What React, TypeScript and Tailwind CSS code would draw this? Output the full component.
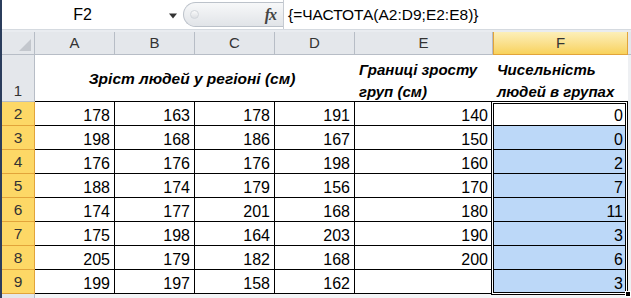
import * as React from "react";

const rows = [
  [178, 163, 178, 191, 140, 0],
  [198, 168, 186, 167, 150, 0],
  [176, 176, 176, 198, 160, 2],
  [188, 174, 179, 156, 170, 7],
  [174, 177, 201, 168, 180, 11],
  [175, 198, 164, 203, 190, 3],
  [205, 179, 182, 168, 200, 6],
  [199, 197, 158, 162, null, 3],
];

const widths = ["w-[80px]", "w-[80px]", "w-[80px]", "w-[80px]", "w-[138px]", "w-[135px]"];
const letters = ["A", "B", "C", "D", "E", "F"];

function FormulaBar() {
  return (
    <div className="flex h-[29px] items-center bg-white">
      <div className="relative flex h-full w-[181px] items-center justify-center">
        <span className="mr-[20px] text-[16px] text-black">F2</span>
        <svg className="absolute left-[166px] top-[13px]" width="10" height="6" viewBox="0 0 10 6">
          <path d="M1 0.5 L9 0.5 L5 5.5 Z" fill="#333" />
        </svg>
      </div>
      <div className="flex h-[25px] w-[100px] items-center rounded-l-full border border-r-0 border-[#bcc2ca] bg-gradient-to-b from-[#f7f8f9] to-[#e1e4e8] pl-[6px]">
        <div className="h-[9px] w-[9px] rounded-full border border-[#d2d6db] bg-gradient-to-b from-[#fafafa] to-[#dcdfe3]" />
        <span className="ml-auto mr-[7px] font-['Liberation_Serif',serif] text-[16px] font-bold italic text-[#444] tracking-[-1px]">
          fx
        </span>
      </div>
      <div className="flex h-full flex-1 items-center border-l border-[#c6cbd2] pl-[4px]">
        <span className="text-[15.5px] text-black">{"{=ЧАСТОТА(A2:D9;E2:E8)}"}</span>
      </div>
    </div>
  );
}

function ColumnHeader() {
  return (
    <div className="flex h-[23px]">
      <div className="relative h-full w-[33px] border-r border-b border-[#b7bdc6] bg-[#e4e7eb]">
        <svg className="absolute right-[3px] bottom-[3px]" width="12" height="12" viewBox="0 0 12 12">
          <path d="M12 0 L12 12 L0 12 Z" fill="#c3c7cd" />
        </svg>
      </div>
      {letters.map((l, i) =>
        l === "F" ? (
          <div
            key={l}
            className={`${widths[i]} flex h-full items-center justify-center border-x border-b border-[#e2a43a] bg-gradient-to-b from-[#fcefb9] to-[#f8d25a] text-[15px] text-[#333]`}
          >
            {l}
          </div>
        ) : (
          <div
            key={l}
            className={`${widths[i]} flex h-full items-center justify-center border-r border-b border-[#b7bdc6] bg-[#e4e7eb] text-[15px] text-[#333]`}
          >
            {l}
          </div>
        )
      )}
      <div className="h-full flex-1 border-b border-[#b7bdc6] bg-[#e4e7eb]" />
    </div>
  );
}

function TitleRow() {
  return (
    <div className="flex h-[47px]">
      <div className="flex h-full w-[33px] items-end justify-center border-r border-b border-[#b7bdc6] bg-[#e4e7eb] text-[15px] leading-[20px] text-[#333]">
        1
      </div>
      <div className="flex h-full w-[320px] items-center justify-center border-b border-black bg-white pr-[6px] pt-[2px] text-[15.5px] font-bold italic text-black">
        Зріст людей у регіоні (см)
      </div>
      <div className="flex h-full w-[138px] flex-col justify-end gap-[4px] border-b border-black bg-white pl-[4px] text-[15px] font-bold italic leading-[18px] text-black">
        <span>Границі зросту</span>
        <span>груп (см)</span>
      </div>
      <div className="flex h-full w-[135px] flex-col justify-end gap-[4px] border-b border-black bg-white pl-[4px] text-[15px] font-bold italic leading-[18px] text-black">
        <span>Чисельність</span>
        <span>людей в групах</span>
      </div>
      <div className="h-full flex-1 bg-[#eef0f3]" />
    </div>
  );
}

function DataRow({ n, values }: { n: number; values: (number | null)[] }) {
  return (
    <div className="flex h-[24px]">
      <div className="flex h-full w-[33px] items-center justify-center border-r border-b border-[#e2a43a] bg-[#fdd866] text-[15.5px] text-[#333]">
        {n}
      </div>
      {values.map((v, i) => {
        const sel = i === 5 && n > 2;
        return (
          <div
            key={i}
            className={`${widths[i]} flex h-full items-end justify-end border-r border-b border-black pr-[4px] text-[16px] leading-[19px] text-black ${
              sel ? "bg-[#bcd8f8]" : "bg-white"
            }`}
          >
            {v}
          </div>
        );
      })}
      <div className="h-full flex-1 bg-[#eef0f3]" />
    </div>
  );
}

export default function App() {
  return (
    <div className="h-[298px] w-[631px] overflow-hidden border-l-2 border-[#2b3d5c] bg-[#eef0f3] font-['Liberation_Sans',Arial,sans-serif]">
      <FormulaBar />
      <div className="h-[3px] border-t border-[#d5dae0] bg-[#e9ecf0]" />
      <div className="relative">
        <ColumnHeader />
        <TitleRow />
        {rows.map((r, i) => (
          <DataRow key={i} n={i + 2} values={r} />
        ))}
        <div className="flex h-[4px]">
          <div className="h-full w-[33px] border-r border-[#b7bdc6] bg-[#e4e7eb]" />
          <div className="h-full flex-1 bg-[#f3f4f6]" />
        </div>
        {/* selection F2:F9 */}
        <div className="pointer-events-none absolute left-[489px] top-[69px] h-[194px] w-[137px] border border-black shadow-[inset_0_0_0_1px_#fff,inset_0_0_0_2px_#000]" />
        <div className="absolute left-[623px] top-[259px] h-[6px] w-[6px] border border-white bg-black" />
      </div>
    </div>
  );
}
